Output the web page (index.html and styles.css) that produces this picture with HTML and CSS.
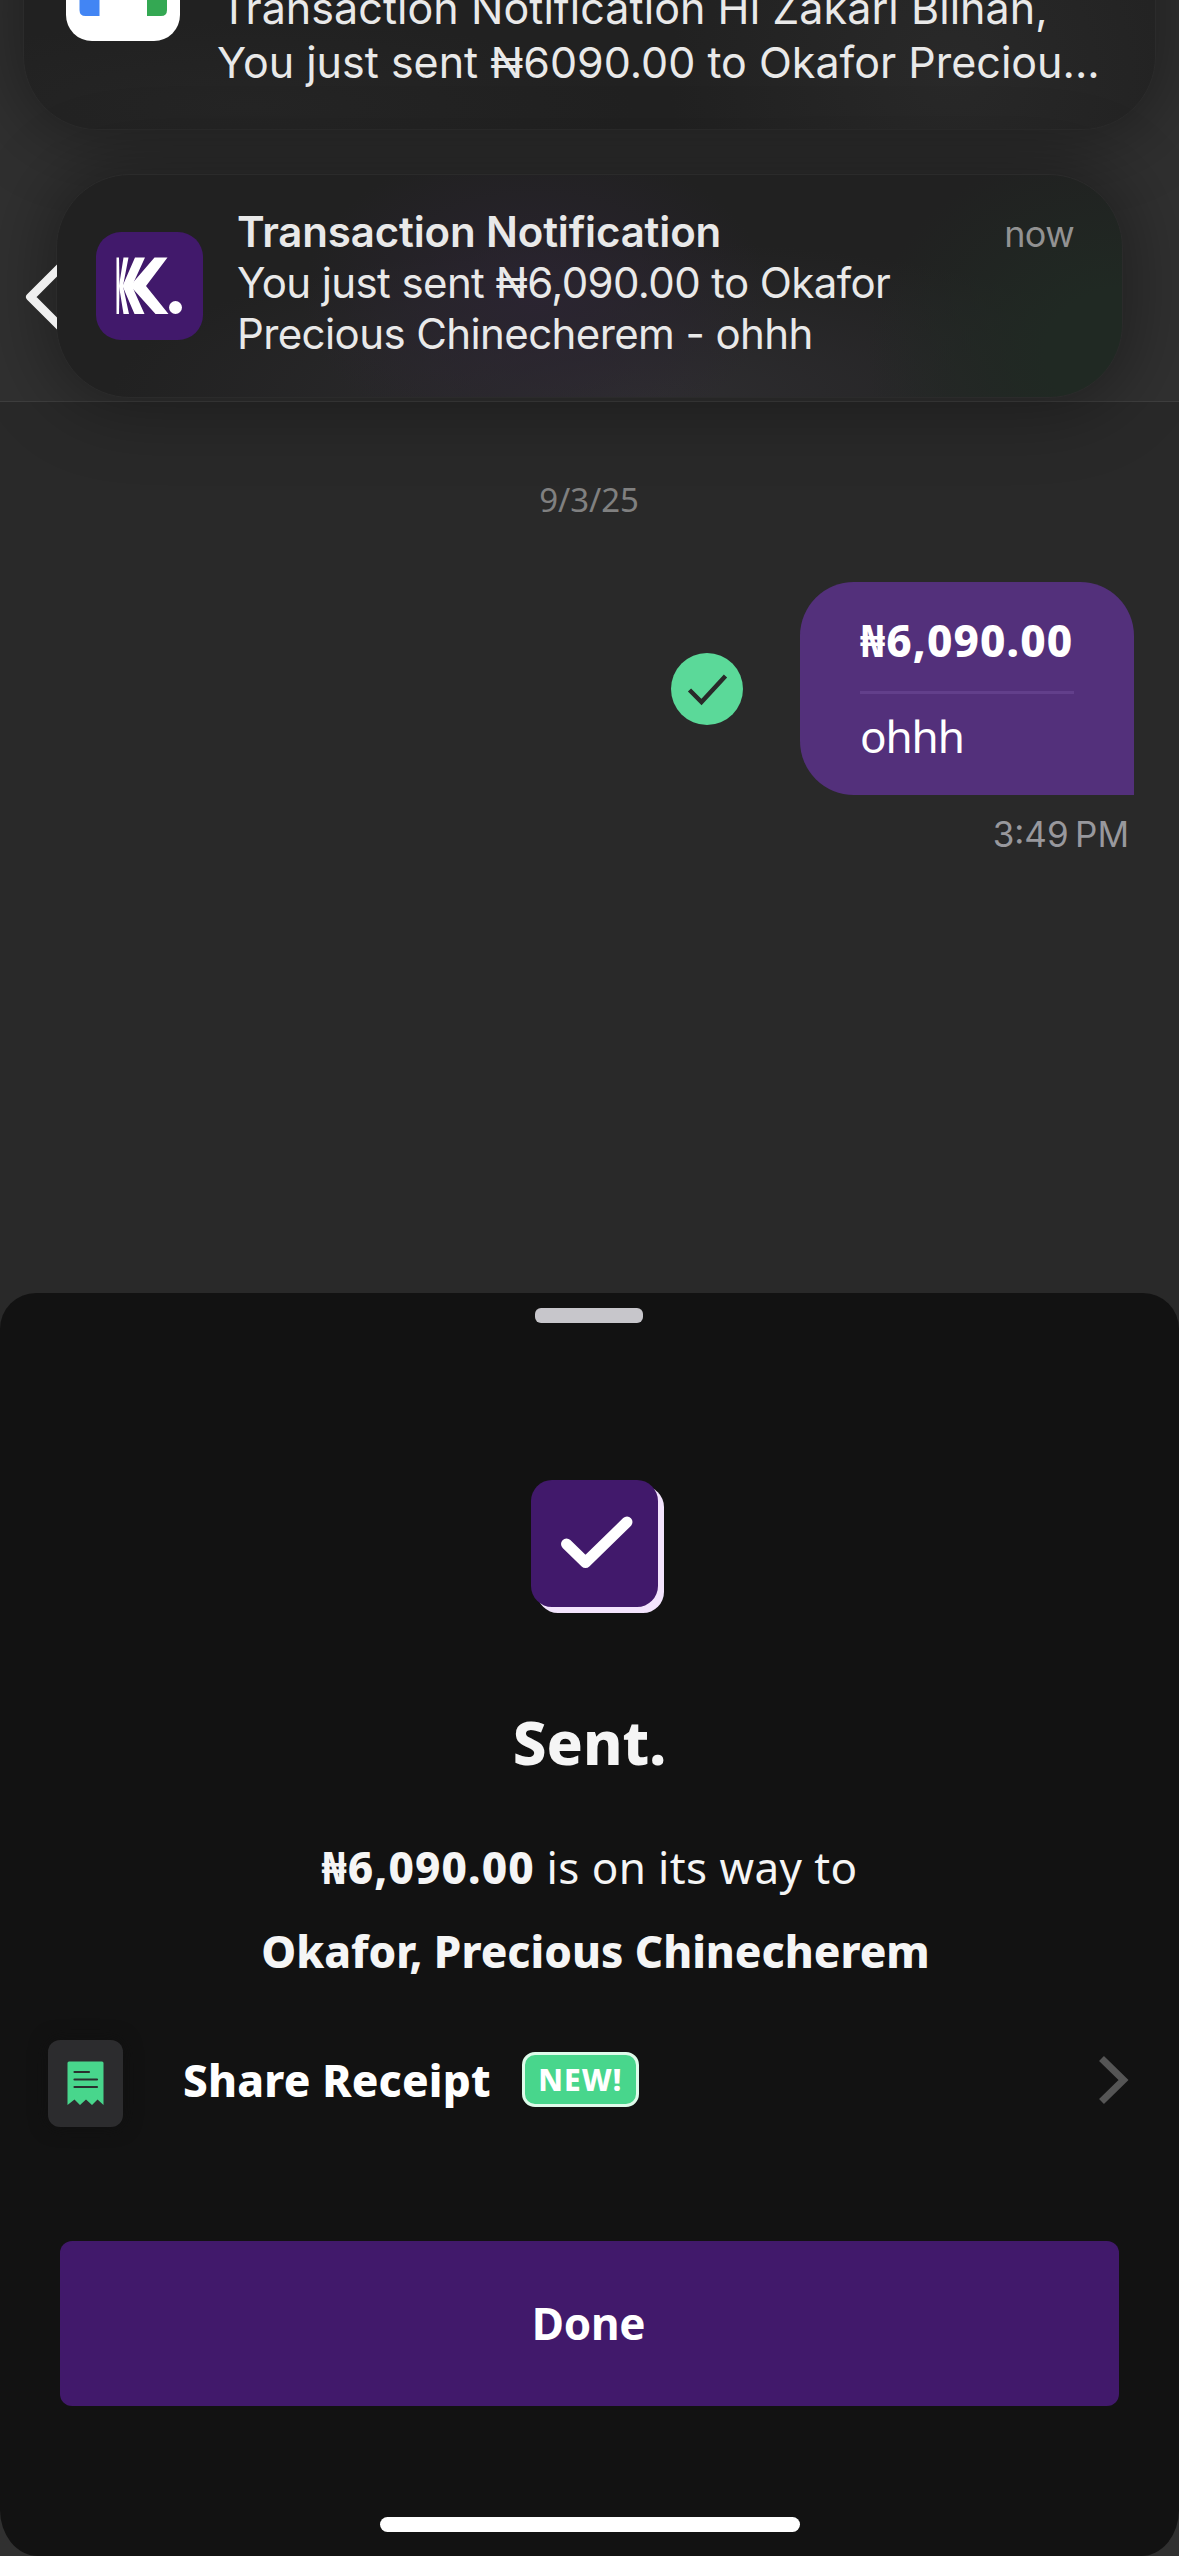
FILE: index.html
```html
<!DOCTYPE html>
<html lang="en">
<head>
<meta charset="utf-8">
<title>Transfer sent</title>
<link rel="stylesheet" href="styles.css">
</head>
<body>
<div class="phone">
  <header class="topbar">
    <svg class="back" width="35" height="66" viewBox="0 0 35 66"><path d="M40 -2 8.500 33 40 68" transform="translate(0 3.300) scale(1 .9)" fill="none" stroke="#efefef" stroke-width="9" stroke-linejoin="round"/></svg>
  </header>

  <main class="chat">
    <div class="chat-date">9/3/25</div>
    <div class="message-row">
      <svg class="status" width="72" height="72" viewBox="0 0 72 72"><circle cx="36" cy="36" r="36" fill="#5bd999"/><path d="M18.500 37 30.500 49 54.500 23" fill="none" stroke="#292929" stroke-width="4.500"/></svg>
      <div class="bubble">
        <div class="bubble-amount">₦6,090.00</div>
        <div class="bubble-note">ohhh</div>
      </div>
    </div>
    <div class="message-time">3:49&#8239;PM</div>
  </main>

  <section class="sheet">
    <div class="handle"></div>
    <svg class="sent-icon" width="149" height="133" viewBox="0 0 149 133">
      <rect x="22" y="6" width="127" height="127" rx="21" fill="#f3e4fd"/>
      <rect x="16" y="0" width="127" height="127" rx="21" fill="#41196b"/>
      <path d="M51.500 64 70.500 82.500 112 42" fill="none" stroke="#fff" stroke-width="11" stroke-linecap="round" stroke-linejoin="round"/>
    </svg>
    <h1 class="sent-title">Sent.</h1>
    <div class="summary">
      <div><strong class="amount">₦6,090.00</strong><span class="way"> is on its way to</span></div>
      <strong class="recipient">Okafor, Precious Chinecherem</strong>
    </div>
    <div class="receipt-row">
      <div class="tile">
        <svg width="37" height="44" viewBox="0 0 37 44">
          <path d="M0.500 2Q0.500 0.500 2 0.500H35Q36.500 0.500 36.500 2V44L30.500 38.500 25 44 19 38.500 13 44 7.500 38.500 0.500 44Z" fill="#48d68c"/>
          <path d="M7.500 11H22M7.500 18.500H30M7.500 26H30" stroke="#29302e" stroke-width="2.200" stroke-linecap="round"/>
        </svg>
      </div>
      <span class="receipt-label">Share Receipt</span>
      <span class="badge">NEW!</span>
      <svg class="chevron" width="32" height="50" viewBox="0 0 32 50"><path d="M2.500 3.500 24.500 25 2.500 46.500" fill="none" stroke="#555" stroke-width="7"/></svg>
    </div>
    <button class="done">Done</button>
    <div class="home-indicator"></div>
  </section>

  <div class="notifications">
    <article class="notice notice-mail">
      <svg class="mail-icon" width="114" height="114" viewBox="0 0 114 114">
        <rect width="114" height="114" rx="26" fill="#fff"/>
        <path d="M13.500 34 33.500 48V89H19.500Q13.500 89 13.500 83Z" fill="#4285f4"/>
        <path d="M101 34 81 48V89H95Q101 89 101 83Z" fill="#34a853"/>
        <path d="M13.500 34 57 67 101 34V49L57 72 13.500 49Z" fill="#ea4335"/>
      </svg>
      <div class="mail-text">
        <div class="mail-line mail-line-first">Transaction Notification Hi Zakari Bilhan,</div>
        <div class="mail-line">You just sent ₦6090.00 to Okafor Preciou...</div>
      </div>
    </article>
    <article class="notice notice-bank">
      <svg class="bank-icon" width="107" height="108" viewBox="0 0 107 108">
        <rect width="107" height="108" rx="25" fill="#41196b"/>
        <g fill="#fff">
          <path d="M20.500 25.500H23L23.500 54 23 82H20.500Z"/>
          <path d="M27.500 25.500H32.500L27 54 33 82H27.500L23 54Z"/>
          <path d="M39 25.500H49L36 54 48.500 82H38.500L26.500 54Z"/>
          <path d="M58.500 25.500H71.500L50 54 72.500 82H59.500L37.500 57.500 28 54 37 50.500Z"/>
          <circle cx="79.500" cy="75.500" r="6.500"/>
        </g>
      </svg>
      <div class="bank-text">
        <div class="bank-head"><strong>Transaction Notification</strong><span class="now">now</span></div>
        <div>You just sent ₦6,090.00 to Okafor<br>Precious Chinecherem - ohhh</div>
      </div>
    </article>
  </div>
</div>
</body>
</html>
```

FILE: styles.css
```css
* { box-sizing: border-box; }

body { margin: 0; background: #303030; }

.phone {
  position: relative;
  display: flex;
  flex-direction: column;
  width: 1179px;
  height: 2556px;
  overflow: hidden;
  background: #303030;
  color: #fff;
  font-family: "Noto Sans", sans-serif;
}

.topbar {
  display: flex;
  align-items: flex-end;
  flex: none;
  height: 402px;
  padding: 0 0 71px 22px;
  border-bottom: 1px solid #3e3e3e;
  background: #303030;
}

/* stays bright above the banner shadow */
.back { position: relative; z-index: 1; display: block; }

.chat {
  flex: none;
  height: 931px;
  margin-bottom: -40px;
  padding: 75px 45px 0 0;
  background: #292929;
}

.chat-date {
  padding: 1px 0 0 44px;
  color: #808080;
  font-size: 33px;
  line-height: 44px;
  letter-spacing: -0.1px;
  text-align: center;
}

.message-row {
  display: flex;
  justify-content: flex-end;
  align-items: center;
  gap: 57px;
  margin-top: 60px;
}

.bubble {
  width: 334px;
  height: 213px;
  padding: 28px 60px 0;
  border-radius: 54px 54px 0 54px;
  background: #53307b;
  font-size: 44px;
  line-height: 60px;
  white-space: nowrap;
}

.bubble-amount {
  padding-bottom: 21px;
  border-bottom: 3px solid #623f8b;
  font-weight: 800;
  letter-spacing: 1.1px;
}

.bubble-note {
  padding-top: 12px;
  letter-spacing: -1.1px;
}

.message-time {
  margin-top: 17px;
  padding-right: 5px;
  color: #98989d;
  font: 400 35px/44px Inter, sans-serif;
  text-align: right;
}

.sheet {
  position: relative;
  display: flex;
  flex-direction: column;
  align-items: center;
  flex: none;
  height: 1263px;
  padding-top: 15px;
  border-radius: 36px 36px 38px 38px / 36px 36px 46px 46px;
  background: #121212;
}

.handle {
  width: 108px;
  height: 15px;
  margin-right: 2px;
  border-radius: 6px;
  background: #c7c6cb;
}

.sent-icon { display: block; margin-top: 157px; }

.sent-title {
  margin: 89px 0 0;
  color: #f5f5f5;
  font-size: 60px;
  font-weight: 800;
  line-height: 80px;
}

.summary {
  margin-top: 43px;
  color: #f5f5f5;
  font-size: 44px;
  line-height: 84px;
  text-align: center;
  white-space: nowrap;
}

.amount { font-weight: 800; letter-spacing: 1.1px; }
.way { letter-spacing: 0.4px; }
.recipient { display: block; padding-left: 12px; font-weight: 800; }

.receipt-row {
  display: flex;
  align-items: center;
  align-self: stretch;
  height: 87px;
  margin: 47px 48px 0;
}

.tile {
  display: flex;
  align-items: center;
  justify-content: center;
  width: 75px;
  height: 87px;
  border-radius: 12px;
  background: #2c2c2e;
  box-shadow: 0 0 18px #101010;
}

.tile svg { margin-bottom: 1px; }

.receipt-label {
  margin: -7px 0 0 60px;
  font-size: 44px;
  font-weight: 800;
  line-height: 60px;
  letter-spacing: 0.2px;
}

.badge {
  width: 117px;
  height: 55px;
  margin: -8px 0 0 31px;
  border: 3px solid #defbea;
  border-radius: 13px;
  background: #48d68c;
  font-size: 30px;
  font-weight: 800;
  line-height: 49px;
  letter-spacing: 1px;
  text-align: center;
}

.chevron { margin: -8px 0 0 auto; }

.done {
  align-self: stretch;
  height: 165px;
  margin: 114px 60px 0;
  padding: 0 2px 0 0;
  border: 0;
  border-radius: 12px;
  background: #41196b;
  color: #fff;
  font: 700 44px/165px "Noto Sans", sans-serif;
  letter-spacing: -0.3px;
}

.home-indicator {
  width: 420px;
  height: 15px;
  margin-top: 111px;
  border-radius: 8px;
  background: #fff;
}

.notifications {
  position: absolute;
  top: -100px;
  left: 0;
  right: 0;
  display: flex;
  flex-direction: column;
  gap: 44px;
  color: #e9e9e9;
  font-family: Inter, sans-serif;
  font-size: 42px;
}

.notice {
  display: flex;
  border: 1px solid #2b2b2b;
  border-radius: 74px;
  background-color: #212121;
  box-shadow: 0 0 70px 10px rgba(0, 0, 0, 0.34);
  white-space: nowrap;
}

.notice-mail {
  height: 230px;
  margin: 0 23px;
  padding: 26px 0 0 42px;
  background-image: radial-gradient(circle at 82% 75%, #292929, transparent 30%), radial-gradient(ellipse at 20% 90%, #252525, transparent 30%);
}

.mail-icon { flex: none; }

.mail-text {
  padding: 54px 0 0 37px;
  font-size: 43px;
  line-height: 54px;
}

.mail-line-first { padding-left: 3px; letter-spacing: 0.06px; }

.notice-bank {
  position: relative;
  align-items: center;
  height: 224px;
  margin: 0 56px;
  padding: 0 48px 0 39px;
  background-image:
    radial-gradient(ellipse 24% 95% at 100% 80%, #202923 30%, transparent),
    radial-gradient(ellipse 22% 70% at 45% 55%, rgba(43, 36, 50, 0.9), transparent),
    radial-gradient(ellipse 50% 70% at 55% 100%, #2e2d30, transparent);
}

.bank-icon { flex: none; }

.bank-text {
  flex: 1;
  margin: -7px 0 0 34px;
  line-height: 51px;
  letter-spacing: -0.6px;
}

.bank-head {
  display: flex;
  justify-content: space-between;
  align-items: baseline;
  height: 51px;
  letter-spacing: -0.15px;
}

.bank-head strong { font-weight: 600; }

.now {
  color: #929292;
  font-size: 36px;
  letter-spacing: -0.6px;
}
```
